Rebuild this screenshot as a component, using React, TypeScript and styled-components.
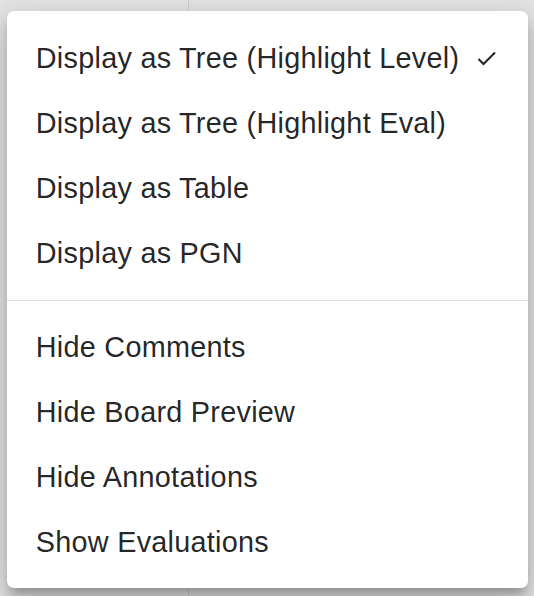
import React from "react";
import styled, { createGlobalStyle } from "styled-components";

const Global = createGlobalStyle`
  html, body { margin: 0; padding: 0; }
  body { background: #e4e4e4; font-family: "Liberation Sans", Arial, sans-serif; }
`;

const Page = styled.div`
  position: relative;
  width: 534px;
  height: 596px;
  overflow: hidden;
  display: grid;
  grid-template-columns: 189px 1fr;
  background: #e4e4e4;
`;

const Pane = styled.div<{ $divided?: boolean }>`
  height: 100%;
  border-right: ${(p) => (p.$divided ? "1px solid #cfcfcf" : "none")};
`;

const Menu = styled.ul`
  position: absolute;
  left: 7px;
  top: 11px;
  width: 521px;
  margin: 0;
  padding: 15.4px 0 13.4px;
  list-style: none;
  box-sizing: border-box;
  background: #ffffff;
  border-radius: 7px;
  box-shadow: 0px 9px 9px -5px rgba(0, 0, 0, 0.2),
    0px 14px 18px 2px rgba(0, 0, 0, 0.14),
    0px 5px 25px 4px rgba(0, 0, 0, 0.12);
`;

const Item = styled.li`
  display: flex;
  align-items: center;
  height: 64.8px;
  padding: 0 28.8px;
  font-family: "Liberation Sans", Arial, sans-serif;
  font-size: 28.8px;
  letter-spacing: 0.00938em;
  color: rgba(0, 0, 0, 0.87);
  white-space: nowrap;
  box-sizing: border-box;
`;

const Check = styled.svg`
  margin-left: 18px;
  width: 20px;
  height: 16px;
  flex: none;
`;

const Divider = styled.li`
  height: 0;
  margin: 14.4px 0;
  border-top: 1.2px solid rgba(0, 0, 0, 0.12);
`;

const views = [
  { label: "Display as Tree (Highlight Level)", checked: true },
  { label: "Display as Tree (Highlight Eval)" },
  { label: "Display as Table" },
  { label: "Display as PGN" },
];

const toggles = ["Hide Comments", "Hide Board Preview", "Hide Annotations", "Show Evaluations"];

export default function App() {
  return (
    <>
      <Global />
      <Page>
        <Pane $divided />
        <Pane />
        <Menu>
          {views.map((v) => (
            <Item key={v.label}>
              {v.label}
              {v.checked && (
                <Check viewBox="0 0 20 16">
                  <path d="M1.5 8 L6.5 13 L18 1.5" fill="none" stroke="#212121" strokeWidth="2" />
                </Check>
              )}
            </Item>
          ))}
          <Divider />
          {toggles.map((t) => (
            <Item key={t}>{t}</Item>
          ))}
        </Menu>
      </Page>
    </>
  );
}
